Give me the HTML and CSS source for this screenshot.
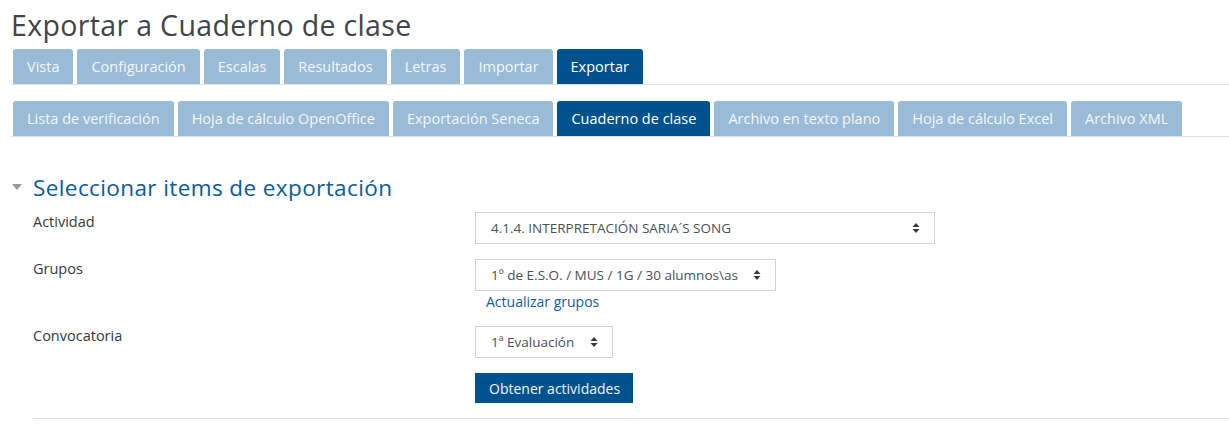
FILE: index.html
```html
<!DOCTYPE html>
<html lang="es">
<head>
<meta charset="utf-8">
<title>Exportar a Cuaderno de clase</title>
<link rel="stylesheet" href="styles.css">
</head>
<body>
<div class="page">
  <h1 class="title">Exportar a Cuaderno de clase</h1>
  <ul class="tabs">
    <li class="tab">Vista</li>
    <li class="tab">Configuración</li>
    <li class="tab">Escalas</li>
    <li class="tab">Resultados</li>
    <li class="tab">Letras</li>
    <li class="tab">Importar</li>
    <li class="tab active">Exportar</li>
  </ul>
  <ul class="tabs second">
    <li class="tab">Lista de verificación</li>
    <li class="tab">Hoja de cálculo OpenOffice</li>
    <li class="tab">Exportación Seneca</li>
    <li class="tab active">Cuaderno de clase</li>
    <li class="tab">Archivo en texto plano</li>
    <li class="tab">Hoja de cálculo Excel</li>
    <li class="tab">Archivo XML</li>
  </ul>

  <fieldset class="section">
    <div class="legend">
      <svg class="caret" width="10" height="6" viewBox="0 0 10 6"><path d="M0 0 L10 0 L5 6 Z" fill="#9a9a9a"/></svg>
      <span>Seleccionar items de exportación</span>
    </div>
    <div class="row">
      <div class="label">Actividad</div>
      <div class="control">
        <div class="select sel-actividad"><span>4.1.4. INTERPRETACIÓN SARIA´S SONG</span>
          <svg class="arrows" width="8" height="12" viewBox="0 0 8 12"><path d="M4 1 L7.5 5 L0.5 5 Z M4 11 L7.5 7 L0.5 7 Z" fill="#343a40"/></svg>
        </div>
      </div>
    </div>
    <div class="row">
      <div class="label">Grupos</div>
      <div class="control">
        <div class="select sel-grupos"><span>1º de E.S.O. / MUS / 1G / 30 alumnos\as</span>
          <svg class="arrows" width="8" height="12" viewBox="0 0 8 12"><path d="M4 1 L7.5 5 L0.5 5 Z M4 11 L7.5 7 L0.5 7 Z" fill="#343a40"/></svg>
        </div>
        <a class="link" href="#">Actualizar grupos</a>
      </div>
    </div>
    <div class="row">
      <div class="label">Convocatoria</div>
      <div class="control">
        <div class="select sel-conv"><span>1ª Evaluación</span>
          <svg class="arrows" width="8" height="12" viewBox="0 0 8 12"><path d="M4 1 L7.5 5 L0.5 5 Z M4 11 L7.5 7 L0.5 7 Z" fill="#343a40"/></svg>
        </div>
      </div>
    </div>
    <div class="row">
      <div class="label"></div>
      <div class="control">
        <button class="btn">Obtener actividades</button>
      </div>
    </div>
  </fieldset>
</div>
</body>
</html>
```

FILE: styles.css
```css
* { box-sizing: border-box; }
body {
  margin: 0;
  background: #fff;
  font-family: "Open Sans", "Noto Sans", sans-serif;
  color: #343a40;
}
.page {
  padding: 0 0 0 11px;
}
.title {
  margin: 8px 0 0 0;
  font-size: 28.5px;
  line-height: 34px;
  font-weight: 400;
  color: #3f4549;
  letter-spacing: 0.35px;
}
.tabs {
  list-style: none;
  margin: 7px 0 0 0;
  padding: 0 0 0 2px;
  display: flex;
  gap: 4px;
  border-bottom: 1px solid #dee2e6;
}
.tabs.second {
  margin-top: 16px;
}
.tab {
  height: 35px;
  padding: 0 14px;
  display: flex;
  align-items: center;
  background: #99bbd5;
  color: #f4f7fa;
  font-size: 14.5px;
  border-radius: 3px 3px 0 0;
  white-space: nowrap;
}
.tab.active {
  background: #00528e;
  color: #fff;
}
.section {
  border: 0;
  margin: 36px 0 0 0;
  padding: 0 0 18px 0;
}
.legend {
  display: flex;
  align-items: center;
  height: 28px;
  margin-left: 1px;
}
.caret {
  margin-right: 11px;
}
.legend span {
  font-size: 22.5px;
  color: #0a5b9f;
  font-weight: 400;
  letter-spacing: 0.4px;
}
.section::after {
  content: "";
  display: block;
  margin: 0 0 0 22px;
  border-bottom: 1px solid #dee2e6;
}
.row {
  display: grid;
  grid-template-columns: 442px 1fr;
  margin-left: 22px;
  margin-bottom: 15px;
}
.legend + .row { margin-top: 11px; }
.label {
  font-size: 14.5px;
  line-height: 20px;
  color: #333a40;
}
.control {
  display: flex;
  flex-direction: column;
  align-items: flex-start;
}
.select {
  height: 32px;
  border: 1px solid #ced4da;
  display: flex;
  align-items: center;
  justify-content: space-between;
  padding: 0 14px 0 15px;
  font-size: 13.5px;
  color: #495057;
  background: #fff;
}
.sel-actividad { width: 460px; }
.sel-grupos { width: 301px; }
.sel-conv { width: 138px; }
.link {
  margin: 3px 0 1px 11px;
  font-size: 14px;
  line-height: 16px;
  color: #0f5d9f;
  text-decoration: none;
}
.btn {
  height: 30px;
  padding: 0 13px 0 14px;
  border: 0;
  background: #00528e;
  color: #f2f6fa;
  font-family: inherit;
  font-size: 14px;
}
```
